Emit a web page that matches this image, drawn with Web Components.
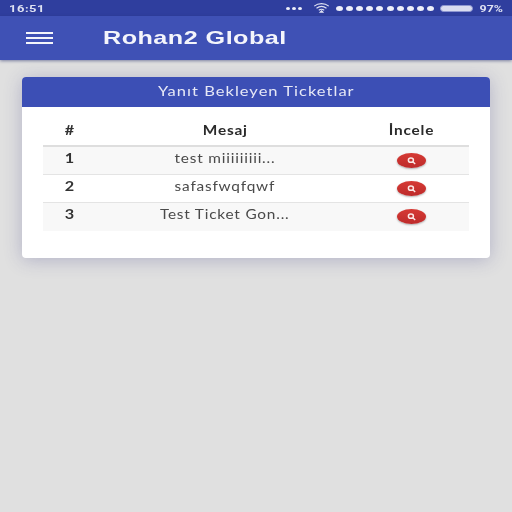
<!DOCTYPE html>
<html>
<head>
<meta charset="utf-8">
<style>
  html, body { margin: 0; padding: 0; height: 100%; }
  body { background: #e0e0e0; font-family: "Lato", "Liberation Sans", sans-serif; overflow: hidden; }
</style>
</head>
<body>
<app-shell>
  <status-bar></status-bar>
  <app-header>Rohan2 Global</app-header>
  <ticket-card title="Yanıt Bekleyen Ticketlar">
    <ticket-row head num="#" msg="Mesaj" action="İncele"></ticket-row>
    <ticket-row striped num="1" msg="test miiiiiiiii..."></ticket-row>
    <ticket-row num="2" msg="safasfwqfqwf"></ticket-row>
    <ticket-row striped num="3" msg="Test Ticket Gon..."></ticket-row>
  </ticket-card>
</app-shell>

<script>
class AppShell extends HTMLElement {
  constructor() {
    super();
    this.attachShadow({ mode: 'open' });
    this.shadowRoot.innerHTML = `
      <style>
        :host { display: flex; flex-direction: column; width: 512px; height: 512px; filter: blur(.35px); }
      </style>
      <slot></slot>
    `;
  }
}

class StatusBar extends HTMLElement {
  constructor() {
    super();
    this.attachShadow({ mode: 'open' });
    const dots = n => '<i></i>'.repeat(n);
    this.shadowRoot.innerHTML = `
      <style>
        :host {
          display: flex; align-items: center; height: 16px; flex: none;
          padding: 0 9px; background: #2f3e9e; color: #dfe2f3;
          font: 700 9.5px "Roboto", "Liberation Sans", sans-serif;
        }
        .time { flex: 1; letter-spacing: .4px; transform: scaleX(1.36); transform-origin: left; }
        .more, .sig { display: flex; }
        .more { gap: 2px; margin-right: 11px; }
        .more i { width: 4px; height: 3px; border-radius: 50%; background: #eef0fa; }
        svg { display: block; margin-right: 6px; }
        .sig { gap: 3px; }
        .sig i { width: 7px; height: 5px; border-radius: 50%; background: #eef0fa; }
        .sig + .sig { margin-left: 4px; }
        .batt {
          width: 31px; height: 5px; margin: 0 12px 0 6px; border-radius: 4px;
          background: #d9dcf0; border: 1px solid #8d96d0;
        }
        .pct { transform: scaleX(1.3); transform-origin: right; }
      </style>
      <span class="time">16:51</span>
      <span class="more">${dots(3)}</span>
      <svg width="17" height="10" viewBox="0 0 18 11" fill="none" stroke="#dfe2f3" stroke-width="1.2">
        <path d="M1 3.5C5.5 -.2 12.5 -.2 17 3.5M3.5 5.8C6.8 3.3 11.2 3.3 14.5 5.8M6 8C7.8 6.7 10.2 6.7 12 8"/>
        <path d="M9 8.5 10.5 10h-3z" fill="#dfe2f3"/>
      </svg>
      <span class="sig">${dots(5)}</span>
      <span class="sig">${dots(5)}</span>
      <span class="batt"></span>
      <span class="pct">97%</span>
    `;
  }
}

class AppHeader extends HTMLElement {
  constructor() {
    super();
    this.attachShadow({ mode: 'open' });
    this.shadowRoot.innerHTML = `
      <style>
        :host {
          display: flex; align-items: center; height: 44px; flex: none;
          padding-left: 26px; background: #3f51b5; color: #f4f5fb;
          box-shadow: 0 1px 3px rgba(40, 50, 110, .55);
          font: 700 18.5px "Liberation Sans", Arial, sans-serif; letter-spacing: .35px;
          position: relative;
        }
        .burger { display: flex; flex-direction: column; gap: 3px; width: 27px; margin-right: 50px; }
        .burger i { height: 2px; background: #f4f5fb; }
        .label { transform: scaleX(1.36); transform-origin: left; }
      </style>
      <span class="burger"><i></i><i></i><i></i></span>
      <span class="label"><slot></slot></span>
    `;
  }
}

class TicketCard extends HTMLElement {
  constructor() {
    super();
    this.attachShadow({ mode: 'open' });
    this.shadowRoot.innerHTML = `
      <style>
        :host {
          display: block; margin: 17px 22px 0 22px; height: 181px;
          background: #fff; border-radius: 4px;
          box-shadow: 0 2px 18px rgba(70, 70, 140, .3);
        }
        .title {
          height: 30px; display: flex; align-items: center; justify-content: center;
          background: #3c4fb5; color: #e6e8f6; border-radius: 4px 4px 0 0;
          font-size: 13px; letter-spacing: .8px;
        }
        .title span { transform: scaleX(1.27); padding-bottom: 3px; }
        .rows { padding: 9px 21px 0; }
      </style>
      <div class="title"><span></span></div>
      <div class="rows"><slot></slot></div>
    `;
    this.shadowRoot.querySelector('.title span').textContent = this.getAttribute('title');
  }
}

class TicketRow extends HTMLElement {
  constructor() {
    super();
    this.attachShadow({ mode: 'open' });
    const head = this.hasAttribute('head');
    const action = head
      ? `<span class="txt">${this.getAttribute('action')}</span>`
      : `<span class="btn"><svg width="9" height="8" viewBox="0 0 9 8" fill="none" stroke="#fbe9e7" stroke-width="1.5"><ellipse cx="3.9" cy="3.2" rx="2.5" ry="2.1"/><path d="M5.8 4.8 8.2 7"/></svg></span>`;
    this.shadowRoot.innerHTML = `
      <style>
        :host {
          display: grid; grid-template-columns: 54px 256px 116px; align-items: center;
          box-sizing: border-box; height: 28px;
          text-align: center; color: #4a4a4a; font-size: 12.5px; letter-spacing: .65px;
          border-bottom: 1px solid #e4e4e4;
        }
        :host([head]) { height: 31px; color: #2b2b2b; font-weight: 700; border-bottom: 2px solid #dedede; }
        :host([striped]) { background: #f8f8f8; }
        :host(:last-child) { border-bottom-color: transparent; }
        .num { display: inline-block; font-weight: 700; color: #333; padding-bottom: 4px; transform: scaleX(1.3); }
        .txt { display: inline-block; transform: scaleX(1.23); padding-bottom: 4px; }
        :host([head]) .num, :host([head]) .txt { padding-bottom: 0; }
        .act { display: flex; justify-content: center; }
        .btn {
          display: flex; align-items: center; justify-content: center;
          width: 29px; height: 15px; border-radius: 50%;
          background: linear-gradient(#d63a34, #bd2b2b); box-shadow: 0 1px 2px rgba(0, 0, 0, .3);
        }
        svg { display: block; }
      </style>
      <span class="num">${this.getAttribute('num')}</span>
      <span><span class="txt">${this.getAttribute('msg')}</span></span>
      <span class="act">${action}</span>
    `;
  }
}

customElements.define('app-shell', AppShell);
customElements.define('status-bar', StatusBar);
customElements.define('app-header', AppHeader);
customElements.define('ticket-card', TicketCard);
customElements.define('ticket-row', TicketRow);
</script>
</body>
</html>
